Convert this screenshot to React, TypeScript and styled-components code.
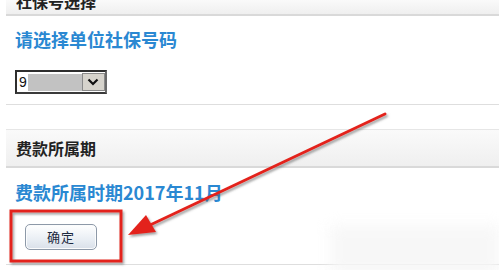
import React from 'react';
import styled, { createGlobalStyle } from 'styled-components';

const GlobalStyle = createGlobalStyle`
  html, body {
    margin: 0;
    padding: 0;
    background: #ffffff;
  }
  body {
    font-family: "Liberation Sans", "Noto Sans CJK SC", sans-serif;
  }
`;

const colors = {
  blue: '#2a88d2',
  heading: '#222222',
  line: '#dedede',
  red: '#e3241b',
};

const Page = styled.div`
  position: relative;
  width: 499px;
  height: 270px;
  overflow: hidden;
  padding-left: 6px;
  box-sizing: border-box;
`;

const SectionHead = styled.div<{ $cropped?: boolean }>`
  display: flex;
  align-items: ${p => (p.$cropped ? 'flex-end' : 'center')};
  height: ${p => (p.$cropped ? '14px' : '36px')};
  padding-left: 10px;
  overflow: hidden;
  background: linear-gradient(#fafafa, #efefef);
  border-top: ${p => (p.$cropped ? 'none' : '1px solid #e6e6e6')};
  border-bottom: 2px solid #d9d9d9;
  font-family: "Noto Sans CJK SC", sans-serif;
  font-weight: 700;
  font-size: 16px;
  color: ${colors.heading};

  span {
    line-height: 16px;
    margin-bottom: ${p => (p.$cropped ? '5px' : '0')};
  }
`;

const Body = styled.div`
  padding: 13px 0 10px 9px;
  border-bottom: 1px solid ${colors.line};
`;

const BlueTitle = styled.div`
  font-family: "Noto Sans CJK SC", sans-serif;
  font-weight: 700;
  font-size: 18px;
  line-height: 21px;
  color: ${colors.blue};
  white-space: nowrap;
`;

const Gap = styled.div`
  height: 24px;
`;

const SelectBox = styled.div`
  display: flex;
  width: 92px;
  height: 24px;
  margin-top: 20px;
  box-sizing: border-box;
  border: 2px solid #2e2e2e;
  border-right-color: #6a6a6a;
  border-bottom-color: #3a3a3a;
  background: #fff;
`;

const SelectValue = styled.div`
  flex: 1;
  display: flex;
  align-items: center;
  padding-left: 2px;
  font-size: 14px;
  color: #111;

  i {
    display: block;
    width: 54px;
    height: 17px;
    margin-left: 1px;
    background: #c2c2c2;
  }
`;

const DropButton = styled.div`
  width: 22px;
  display: flex;
  align-items: center;
  justify-content: center;
  background: #d6d3cc;
  border: 1px solid #8a8a8a;
  margin: 1px 0;
`;

const PeriodBody = styled.div`
  padding: 14px 0 14px 9px;
  border-bottom: 1px solid ${colors.line};
`;

const ConfirmButton = styled.button`
  display: block;
  margin: 21px 0 0 10px;
  width: 72px;
  height: 26px;
  border: 1px solid #8d99a8;
  border-radius: 5px;
  background: linear-gradient(#ffffff, #e9eef4 60%, #d9e0e9);
  box-shadow: inset 0 0 0 1px #fbfcfd;
  font-family: "Noto Sans CJK SC", sans-serif;
  font-size: 13px;
  line-height: 24px;
  color: #1c2940;
  padding: 0;
  letter-spacing: 1px;
`;

const Overlay = styled.svg`
  position: absolute;
  left: 0;
  top: 0;
  pointer-events: none;
`;

const Smudge = styled.div`
  position: absolute;
  left: 330px;
  top: 225px;
  width: 170px;
  height: 50px;
  background: #f6f6f6;
  filter: blur(7px);
  opacity: 0.85;
`;

export default function App() {
  return (
    <>
      <GlobalStyle />
      <Page>
        <SectionHead $cropped>
          <span>社保号选择</span>
        </SectionHead>
        <Body>
          <BlueTitle>请选择单位社保号码</BlueTitle>
          <SelectBox>
            <SelectValue>
              9<i />
            </SelectValue>
            <DropButton>
              <svg width="12" height="8" viewBox="0 0 12 8">
                <path d="M1.5 1.5 L6 6 L10.5 1.5" fill="none" stroke="#111" strokeWidth="2.2" />
              </svg>
            </DropButton>
          </SelectBox>
        </Body>
        <Gap />
        <SectionHead>
          <span>费款所属期</span>
        </SectionHead>
        <PeriodBody>
          <BlueTitle>费款所属时期2017年11月</BlueTitle>
          <ConfirmButton>确定</ConfirmButton>
        </PeriodBody>
        <Smudge />
        <Overlay width="499" height="270" viewBox="0 0 499 270">
          <defs>
            <filter id="sh" x="-20%" y="-20%" width="140%" height="140%">
              <feDropShadow dx="1.5" dy="2" stdDeviation="1.2" floodColor="#555" floodOpacity="0.55" />
            </filter>
          </defs>
          <g filter="url(#sh)">
            <rect x="11" y="211" width="110" height="50" fill="none" stroke={colors.red} strokeWidth="3" />
            <line x1="385" y1="114" x2="148" y2="226" stroke={colors.red} strokeWidth="3" strokeLinecap="round" />
            <polygon points="128,235 146,215 156,232" fill={colors.red} />
          </g>
        </Overlay>
      </Page>
    </>
  );
}
